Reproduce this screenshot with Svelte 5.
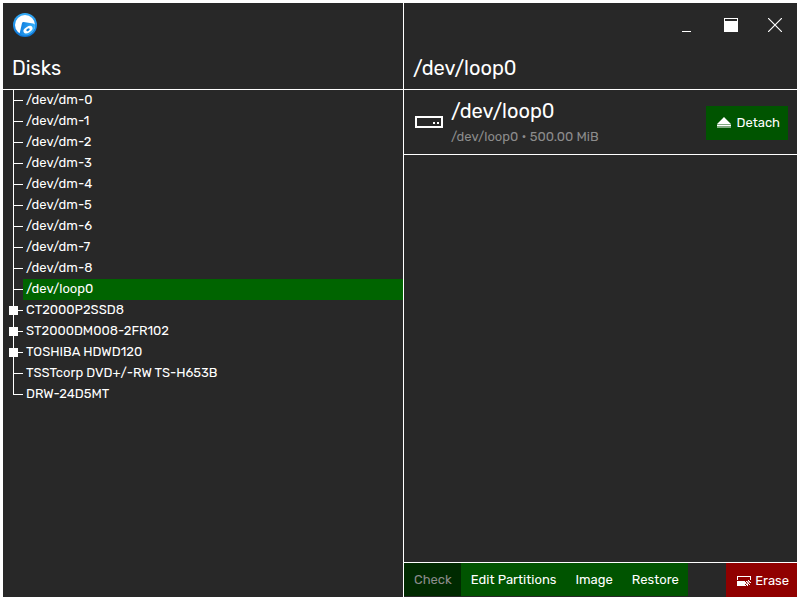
<script>
  const disks = [
    { name: '/dev/dm-0' },
    { name: '/dev/dm-1' },
    { name: '/dev/dm-2' },
    { name: '/dev/dm-3' },
    { name: '/dev/dm-4' },
    { name: '/dev/dm-5' },
    { name: '/dev/dm-6' },
    { name: '/dev/dm-7' },
    { name: '/dev/dm-8' },
    { name: '/dev/loop0', size: '500.00 MiB' },
    { name: 'CT2000P2SSD8', expandable: true },
    { name: 'ST2000DM008-2FR102', expandable: true },
    { name: 'TOSHIBA HDWD120', expandable: true },
    { name: 'TSSTcorp DVD+/-RW TS-H653B' },
    { name: 'DRW-24D5MT' },
  ];
  let selected = $state(9);
  const disk = $derived(disks[selected]);
</script>

<div class="window">
  <aside class="sidebar">
    <header>
      <div class="top">
        <svg class="logo" width="24" height="24" viewBox="0 0 24 24" aria-hidden="true">
          <defs>
            <linearGradient id="rim" x1="0" y1="0" x2="0" y2="1">
              <stop offset="0" stop-color="#35acf8" />
              <stop offset="1" stop-color="#0a74d6" />
            </linearGradient>
            <linearGradient id="face" x1="0" y1="0" x2="1" y2="0.3">
              <stop offset="0" stop-color="#0a78dc" />
              <stop offset="1" stop-color="#3ab2fa" />
            </linearGradient>
          </defs>
          <circle cx="12" cy="12" r="12" fill="url(#rim)" />
          <circle cx="12" cy="12" r="10" fill="#fff" />
          <path d="M6.500 21L9 10.200Q9.300 9 10.600 9.100L20 10.500Q21.500 10.800 22 11.500A10.300 10.300 0 0 1 6.500 21Z" fill="url(#face)" />
          <ellipse cx="15" cy="16.700" rx="5" ry="2.900" transform="rotate(-32 15 16.700)" fill="#fff" />
          <ellipse cx="15" cy="16.700" rx="1.900" ry="1.100" transform="rotate(-32 15 16.700)" fill="#1584dd" />
        </svg>
      </div>
      <h1>Disks</h1>
    </header>
    <ul class="tree">
      {#each disks as item, i}
        <li>
          {#if item.expandable}<span class="knob"></span>{/if}
          <button class="node" class:selected={i === selected} onclick={() => (selected = i)}>{item.name}</button>
        </li>
      {/each}
    </ul>
  </aside>

  <main>
    <header>
      <div class="top controls">
        <button aria-label="Minimize">
          <svg width="14" height="14" viewBox="0 0 14 14"><path d="M2 13h9v1H2z" fill="#fff" /></svg>
        </button>
        <button aria-label="Maximize">
          <svg width="14" height="14" viewBox="0 0 14 14" shape-rendering="crispEdges"><path d="M0 0h14v14H0zM1 1v2h12V1z" fill="#fff" fill-rule="evenodd" /></svg>
        </button>
        <button aria-label="Close">
          <svg width="14" height="14" viewBox="0 0 14 14"><path d="M0 0L14 14M14 0L0 14" stroke="#fff" stroke-width="1.200" /></svg>
        </button>
      </div>
      <h1>{disk.name}</h1>
    </header>

    <section class="summary">
      <svg width="28" height="12" viewBox="0 0 28 12" shape-rendering="crispEdges" aria-hidden="true">
        <path d="M0 0h28v12H0zM2 2v8h24V2zM18 6h2v2h-2zM22 6h2v2h-2z" fill="#fff" fill-rule="evenodd" />
      </svg>
      <div class="info">
        <h2>{disk.name}</h2>
        <p>{disk.name}{disk.size ? ` • ${disk.size}` : ''}</p>
      </div>
      <button class="detach">
        <svg width="14" height="11" viewBox="0 0 14 11" aria-hidden="true">
          <path d="M7 0L14 7H0zM0 8h14v1H0z" fill="#fff" />
          <path d="M0 7h14v1H0zM0 9h14v2H0z" fill="#fff" opacity=".5" />
        </svg>
        Detach
      </button>
    </section>

    <footer>
      <div class="actions">
        <button disabled>Check</button>
        <button>Edit Partitions</button>
        <button>Image</button>
        <button>Restore</button>
      </div>
      <button class="erase">
        <svg width="14" height="10" viewBox="0 0 14 10" shape-rendering="crispEdges" aria-hidden="true">
          <path d="M0 0h14v4h-1V1H1v3H0zM0 5h8v1h1v1H8v3H0z" fill="#fff" />
          <path d="M9 5h1v1H9zM11 4h1v1h-1zM10 6h1v1h-1zM12 5h1v1h-1zM8 7h1v1H8zM11 7h1v1h-1zM13 6h1v1h-1zM9 8h2v1H9zM12 8h1v1h-1zM8 9h1v1H8zM10 9h1v1h-1z" fill="#fff" />
          <path d="M10 5h2v1h-2zM9 7h2v1H9zM11 6h2v1h-2z" fill="#fff" opacity=".5" />
        </svg>
        Erase
      </button>
    </footer>
  </main>
</div>

<style>
  :global(body) {
    background: #fff;
  }
  .window {
    box-sizing: border-box;
    height: 100vh;
    border: 3px solid #fff;
    display: grid;
    grid-template-columns: 401px minmax(0, 1fr);
    background: #282828;
    color: #fff;
    font: 13px/20px Rubik, Inter, sans-serif;
  }
  button {
    font: inherit;
    color: inherit;
    background: none;
    border: 0;
    margin: 0;
    padding: 0;
  }
  .sidebar {
    border-right: 1px solid #fff;
  }
  main {
    display: flex;
    flex-direction: column;
    min-width: 0;
  }
  header {
    box-sizing: border-box;
    height: 87px;
    border-bottom: 1px solid #fff;
  }
  .top {
    display: flex;
    align-items: center;
    height: 44px;
    padding: 0 10px;
  }
  .controls {
    justify-content: flex-end;
    gap: 16px;
    padding: 0 8px;
  }
  .controls button {
    display: flex;
    justify-content: center;
    width: 28px;
    padding: 7px 0;
  }
  h1,
  h2 {
    margin: 0;
    font-size: 20px;
    line-height: 24px;
    font-weight: 400;
  }
  h1 {
    padding: 9px 9px 0;
  }
  .tree {
    list-style: none;
    margin: 0;
    padding: 0 0 0 10px;
  }
  li {
    position: relative;
    display: flex;
    align-items: center;
    height: 21px;
  }
  li::before {
    content: '';
    position: absolute;
    left: 0;
    top: 0;
    bottom: 0;
    border-left: 1px solid #fff;
  }
  li:last-child::before {
    bottom: 10px;
  }
  li::after {
    content: '';
    width: 10px;
    height: 1px;
    order: -1;
    background: #fff;
  }
  .knob {
    position: absolute;
    left: -4px;
    top: 6px;
    width: 9px;
    height: 9px;
    background: #fff;
  }
  .node {
    flex: 1;
    height: 21px;
    padding: 0 3px 2px;
    text-align: left;
  }
  .selected {
    background: #006400;
  }
  .summary {
    box-sizing: border-box;
    display: flex;
    align-items: center;
    gap: 8px;
    height: 65px;
    padding: 0 9px 0 11px;
    border-bottom: 1px solid #fff;
  }
  .info {
    flex: 1;
    padding-top: 2px;
  }
  p {
    margin: 4px 0 0;
    color: #8c8c8c;
  }
  .detach,
  .erase {
    display: flex;
    align-items: center;
    height: 34px;
  }
  .detach {
    gap: 5px;
    margin-top: 1px;
    padding: 0 8px 0 11px;
    background: #005400;
  }
  footer {
    display: flex;
    justify-content: space-between;
    height: 34px;
    margin-top: auto;
    border-top: 1px solid #fff;
  }
  .actions {
    display: flex;
    height: 33px;
    background: #005400;
  }
  .actions button {
    padding: 0 9px 0 10px;
  }
  .actions button:disabled {
    background: #002a00;
    color: #8c8c8c;
  }
  .erase {
    gap: 4px;
    padding: 2px 8px 0 11px;
    background: #900000;
  }
</style>
